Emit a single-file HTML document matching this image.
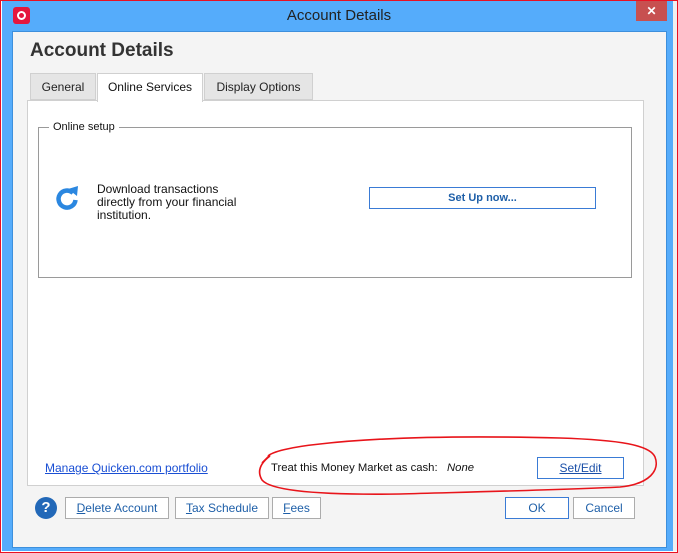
<!DOCTYPE html>
<html><head><style>
*{margin:0;padding:0;box-sizing:border-box}
body{width:678px;height:553px;overflow:hidden;background:#fff;font-family:"Liberation Sans",sans-serif;position:relative}
.a{position:absolute}
.btn{position:absolute;background:#fff;border:1px solid #acacac;font-size:12px;color:#1e5fa8;text-align:center;line-height:20px}
.btn u{text-decoration:underline}
</style></head><body>
<div class="a" style="left:0;top:0;width:678px;height:553px;border:1px solid #e81123"></div>
<div class="a" style="left:2px;top:1px;width:671px;height:550px;background:#55acfb"></div>
<div class="a" style="left:673px;top:1px;width:4px;height:550px;background:#f0f0f0"></div>
<div class="a" style="left:13px;top:7px;width:17px;height:17px;background:#e4173e;border-radius:3px"></div>
<div class="a" style="left:17px;top:11px;width:9px;height:9px;border:2px solid #fff;border-radius:50%"></div>
<div class="a" style="left:0;top:7px;width:678px;text-align:center;color:#222;font-size:15px">Account Details</div>
<div class="a" style="left:636px;top:1px;width:31px;height:20px;background:#c75050;color:#fff;font-size:12px;text-align:center;line-height:20px;font-weight:bold">✕</div>
<div class="a" style="left:12px;top:31px;width:655px;height:517px;background:#f4f4f4;border:1px solid #3d8fdc"></div>
<div class="a" style="left:30px;top:40px;font-size:19px;font-weight:bold;color:#333">Account Details</div>
<div class="a" style="left:30px;top:73px;width:66px;height:27px;background:#e5e5e5;border:1px solid #d0d0d0;font-size:12px;text-align:center;line-height:27px;color:#222">General</div>
<div class="a" style="left:204px;top:73px;width:109px;height:27px;background:#e5e5e5;border:1px solid #d0d0d0;font-size:12px;text-align:center;line-height:27px;color:#222">Display Options</div>
<div class="a" style="left:27px;top:100px;width:617px;height:386px;background:#fff;border:1px solid #d0d0d0"></div>
<div class="a" style="left:97px;top:73px;width:106px;height:29px;background:#fff;border:1px solid #d0d0d0;border-bottom:none;font-size:12px;text-align:center;line-height:27px;color:#111">Online Services</div>
<div class="a" style="left:38px;top:127px;width:594px;height:151px;border:1px solid #9a9a9a"></div>
<div class="a" style="left:49px;top:121px;background:#fff;padding:0 4px;font-size:11px;color:#111">Online setup</div>
<svg class="a" style="left:53px;top:183px" width="28" height="28" viewBox="0 0 28 28"><path d="M20 10 A8.5 8.5 0 1 0 22.5 17" fill="none" stroke="#2b87e0" stroke-width="4.5"/><path d="M15 6 L25 3 L24 13 Z" fill="#2b87e0"/></svg>
<div class="a" style="left:97px;top:183px;font-size:12px;line-height:13px;color:#111">Download transactions<br>directly from your financial<br>institution.</div>
<div class="btn" style="left:369px;top:187px;width:227px;height:22px;border-color:#3a7bd5;font-weight:bold;font-size:11px">Set Up now...</div>
<div class="a" style="left:45px;top:461px;font-size:12px;color:#1a4fd4;text-decoration:underline">Manage Quicken.com portfolio</div>
<div class="a" style="left:271px;top:462px;font-size:11.3px;color:#111">Treat this Money Market as cash:&nbsp;&nbsp; <i>None</i></div>
<div class="btn" style="left:537px;top:457px;width:87px;height:22px;border-color:#3a7bd5;color:#1a4fa8"><u>Set/Edit</u></div>
<div class="a" style="left:35px;top:497px;width:22px;height:22px;border-radius:50%;background:#2268b8;color:#fff;font-weight:bold;font-size:15px;text-align:center;line-height:22px">?</div>
<div class="btn" style="left:65px;top:497px;width:104px;height:22px"><u>D</u>elete Account</div>
<div class="btn" style="left:175px;top:497px;width:94px;height:22px"><u>T</u>ax Schedule</div>
<div class="btn" style="left:272px;top:497px;width:49px;height:22px"><u>F</u>ees</div>
<div class="btn" style="left:505px;top:497px;width:64px;height:22px;border-color:#3a7bd5">OK</div>
<div class="btn" style="left:573px;top:497px;width:62px;height:22px">Cancel</div>
<svg class="a" style="left:0;top:0" width="678" height="553"><path d="M270 456 C262 462,256 470,262 480 C272 492,330 495,400 494 C470 492,560 490,620 487 C650 484,660 470,655 457 C650 445,620 440,560 438 C480 436,390 436,320 444 C290 447,272 452,268 456 M262 463 L270 455" fill="none" stroke="#e8141a" stroke-width="1.6"/></svg>
</body></html>
